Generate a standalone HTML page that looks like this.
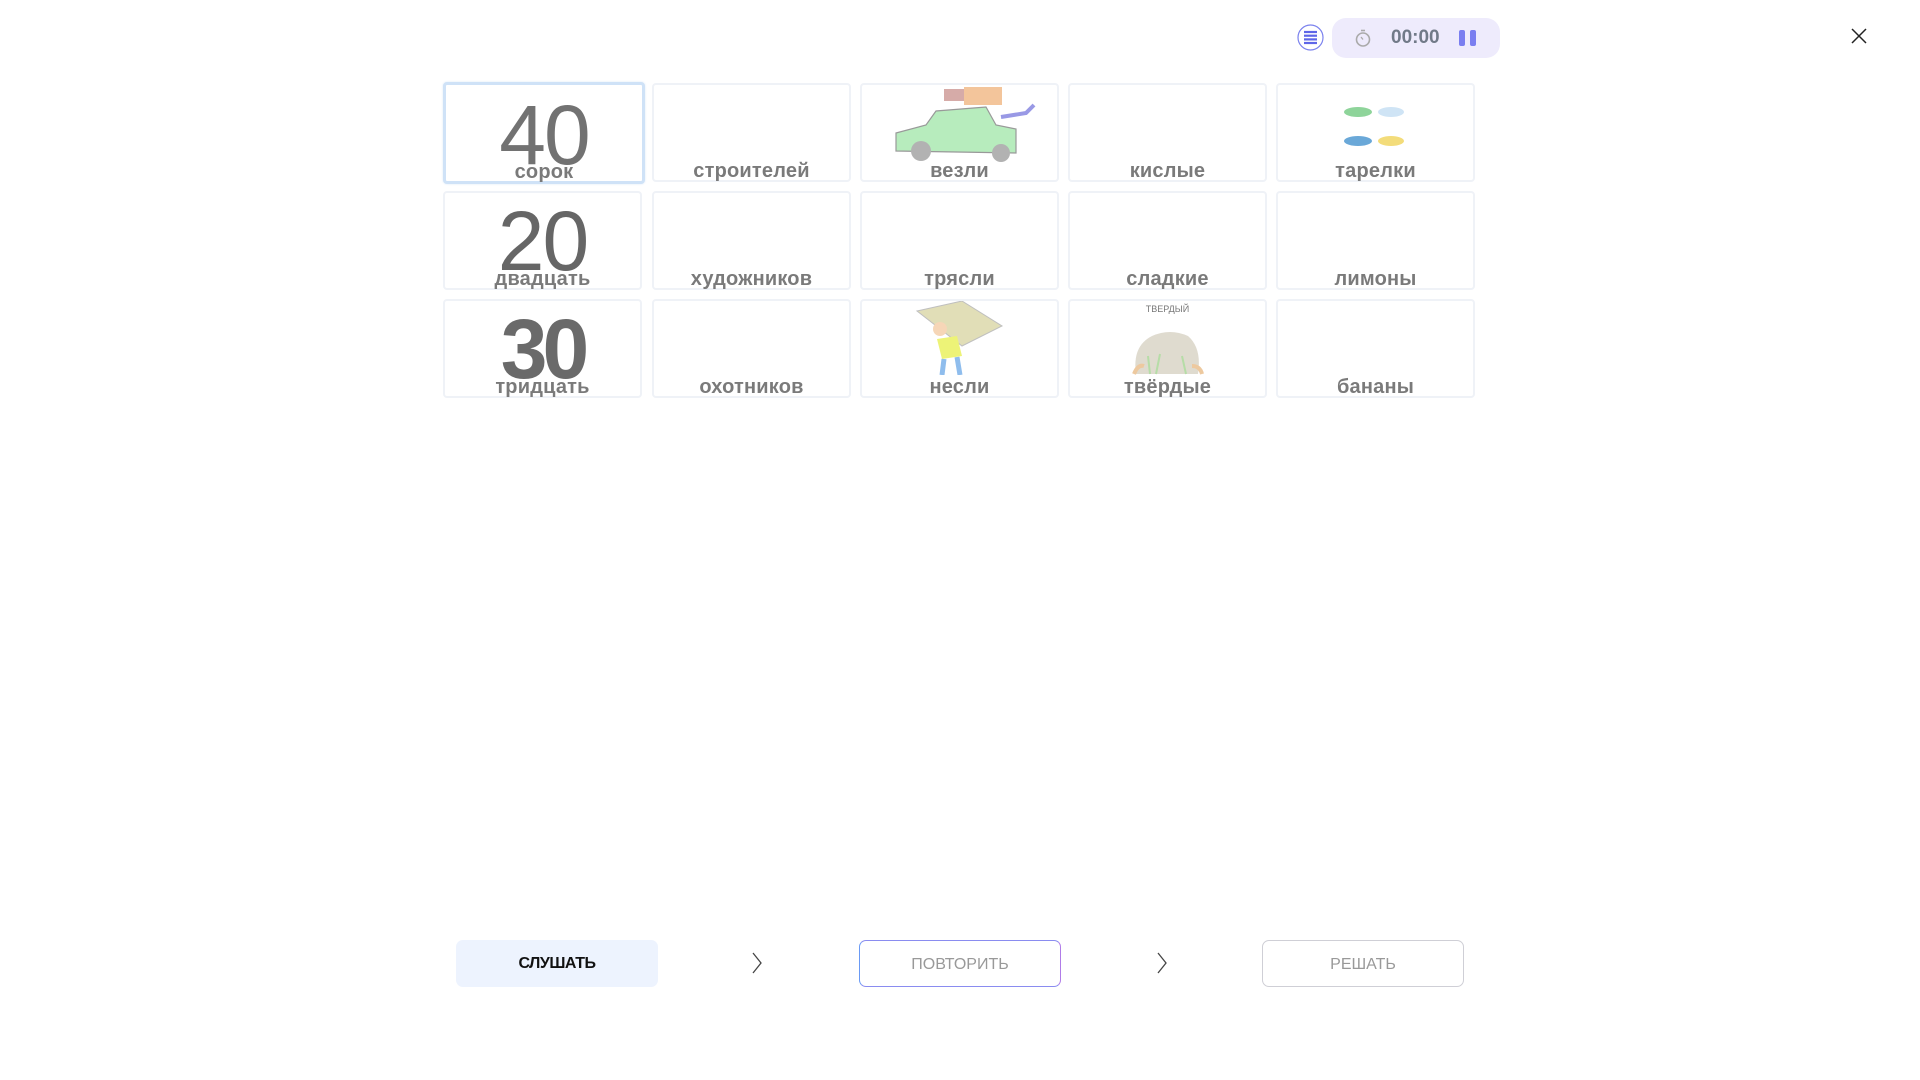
<!DOCTYPE html>
<html><head><meta charset="utf-8"><style>
*{box-sizing:border-box;margin:0;padding:0}
body{width:1920px;height:1080px;background:#fff;font-family:"Liberation Sans",sans-serif;position:relative;overflow:hidden}
.card{position:absolute;width:199px;height:99px;border:2px solid #eff2f7;border-radius:4px;background:#fff}
.card.sel{border:3px solid #cfe2f7;box-shadow:0 0 2px #dbe8f8}
.lbl{position:absolute;left:0;right:0;top:75px;text-align:center;font-size:20px;font-weight:bold;color:#7a7a7a;letter-spacing:0.2px}
.num{position:absolute;left:0;right:0;top:6px;text-align:center;font-size:84px;color:#6f6f6f;line-height:84px;letter-spacing:-2px}
.btn{position:absolute;top:940px;width:202px;height:47px;border-radius:7px;text-align:center;line-height:47px;font-size:16px}
svg.img{opacity:.75}
</style></head><body>
<svg style="position:absolute;left:1297px;top:24px" width="27" height="27" viewBox="0 0 27 27"><circle cx="13.5" cy="13.5" r="12.5" fill="#fff" stroke="#7b82ee" stroke-width="1.2"/><g stroke="#5e66e8" stroke-width="2.2"><line x1="7" y1="8" x2="20" y2="8"/><line x1="7" y1="11.7" x2="20" y2="11.7"/><line x1="7" y1="15.4" x2="20" y2="15.4"/><line x1="7" y1="19" x2="20" y2="19"/></g></svg>
<div style="position:absolute;left:1332px;top:18px;width:168px;height:40px;border-radius:14px;background:#eeebfc"></div>
<svg style="position:absolute;left:1353px;top:27px" width="20" height="22" viewBox="0 0 20 22"><circle cx="10" cy="12.5" r="6.5" fill="none" stroke="#aaa" stroke-width="1.6"/><line x1="8" y1="3.5" x2="12" y2="3.5" stroke="#aaa" stroke-width="1.6"/><line x1="10" y1="12.5" x2="8" y2="10" stroke="#aaa" stroke-width="1.3"/></svg>
<div style="position:absolute;left:1391px;top:27px;font-size:19px;font-weight:bold;color:#717a88">00:00</div>
<div style="position:absolute;left:1459px;top:30px;width:6px;height:16px;border-radius:2px;background:#7a7ef0"></div>
<div style="position:absolute;left:1470px;top:30px;width:6px;height:16px;border-radius:2px;background:#7a7ef0"></div>
<svg style="position:absolute;left:1850px;top:27px" width="18" height="18" viewBox="0 0 18 18"><path d="M2 2L16 16M16 2L2 16" stroke="#222" stroke-width="1.5"/></svg>

<div class="card sel" style="left:443px;top:82px;width:202px;height:102px"><div class="num" style="top:8px;color:#727272">40</div><div class="lbl" style="top:76px">сорок</div></div>
<div class="card" style="left:652px;top:83px"><div class="lbl">строителей</div></div>
<div class="card" style="left:860px;top:83px">
<svg class="img" style="position:absolute;left:4px;top:0" width="190" height="80" viewBox="0 0 190 80"><rect x="78" y="4" width="22" height="12" fill="#b0605a" opacity=".7"/><rect x="98" y="2" width="38" height="18" fill="#f0b27a"/><path d="M30 48 L60 40 L70 26 L120 22 L130 40 L150 44 L150 68 L30 66 Z" fill="#9fe6a8" stroke="#777" stroke-width="1.2"/><circle cx="55" cy="66" r="10" fill="#999"/><circle cx="135" cy="68" r="9" fill="#999"/><path d="M135 32 L160 28 L168 20" stroke="#7777dd" stroke-width="4" fill="none"/></svg>
<div class="lbl">везли</div></div>
<div class="card" style="left:1068px;top:83px"><div class="lbl">кислые</div></div>
<div class="card" style="left:1276px;top:83px">
<svg style="position:absolute;left:65px;top:18px" width="70" height="46" viewBox="0 0 70 46"><ellipse cx="15" cy="9" rx="14" ry="5" fill="#8ed49a"/><ellipse cx="48" cy="9" rx="13" ry="5" fill="#cfe4f5"/><ellipse cx="15" cy="38" rx="14" ry="5" fill="#6aa8d8"/><ellipse cx="48" cy="38" rx="13" ry="5" fill="#f3dc7a"/></svg>
<div class="lbl">тарелки</div></div>
<div class="card" style="left:443px;top:191px"><div class="num" style="color:#666">20</div><div class="lbl">двадцать</div></div>
<div class="card" style="left:652px;top:191px"><div class="lbl">художников</div></div>
<div class="card" style="left:860px;top:191px"><div class="lbl">трясли</div></div>
<div class="card" style="left:1068px;top:191px"><div class="lbl">сладкие</div></div>
<div class="card" style="left:1276px;top:191px"><div class="lbl">лимоны</div></div>
<div class="card" style="left:443px;top:299px"><div class="num" style="font-weight:bold;color:#6a6a6a;letter-spacing:-5px">30</div><div class="lbl">тридцать</div></div>
<div class="card" style="left:652px;top:299px"><div class="lbl">охотников</div></div>
<div class="card" style="left:860px;top:299px">
<svg class="img" style="position:absolute;left:50px;top:0" width="95" height="74" viewBox="0 0 95 74"><path d="M5 10 L50 0 L90 25 L50 45 Z" fill="#d8d3a0" stroke="#aaa"/><circle cx="28" cy="28" r="7" fill="#f3c9a0"/><path d="M25 38 L45 35 L50 55 L30 58 Z" fill="#e8f04a"/><path d="M32 58 L30 74 M45 56 L48 74" stroke="#6aa8e8" stroke-width="5"/></svg>
<div class="lbl">несли</div></div>
<div class="card" style="left:1068px;top:299px">
<div style="position:absolute;left:0;right:0;top:3px;text-align:center;font-size:9px;color:#777">ТВЕРДЫЙ</div>
<svg class="img" style="position:absolute;left:60px;top:25px" width="75" height="50" viewBox="0 0 75 50"><path d="M6 48 Q2 20 22 10 Q40 2 58 10 Q72 22 68 48 Z" fill="#d5cfc0"/><path d="M4 48 Q8 38 14 40 M62 40 Q70 40 72 48" stroke="#e8b880" stroke-width="4" fill="none"/><path d="M20 48 L18 30 M26 48 L30 28 M56 48 L52 30" stroke="#9ed28a" stroke-width="2"/></svg>
<div class="lbl">твёрдые</div></div>
<div class="card" style="left:1276px;top:299px"><div class="lbl">бананы</div></div>

<div class="btn" style="left:456px;background:#edf3fe;color:#111;font-weight:bold;letter-spacing:-0.5px">СЛУШАТЬ</div>
<svg style="position:absolute;left:751px;top:951px" width="12" height="24" viewBox="0 0 12 24"><path d="M2 2L10 12L2 22" stroke="#444" stroke-width="1.3" fill="none"/></svg>
<div class="btn" style="left:859px;border:1.5px solid #8a8cf0;border-left-color:#6a9af5;border-right-color:#b07ce8;color:#999">ПОВТОРИТЬ</div>
<svg style="position:absolute;left:1156px;top:951px" width="12" height="24" viewBox="0 0 12 24"><path d="M2 2L10 12L2 22" stroke="#444" stroke-width="1.3" fill="none"/></svg>
<div class="btn" style="left:1262px;border:1.5px solid #cfcfd6;color:#999">РЕШАТЬ</div>
</body></html>
